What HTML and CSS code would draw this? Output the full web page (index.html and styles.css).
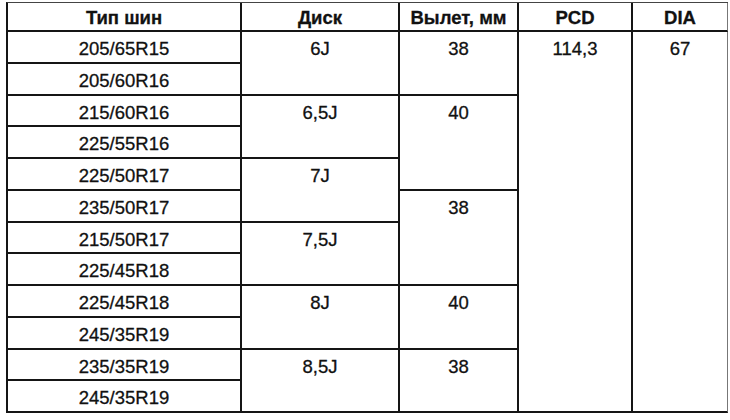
FILE: index.html
```html
<!DOCTYPE html>
<html lang="ru">
<head>
<meta charset="utf-8">
<title>Тип шин</title>
<link rel="stylesheet" href="styles.css">
</head>
<body>
<div class="tbl">
  <div class="cell head c1">Тип шин</div>
  <div class="cell head c2">Диск</div>
  <div class="cell head c3">Вылет, мм</div>
  <div class="cell head c4">PCD</div>
  <div class="cell head c5">DIA</div>

  <div class="cell c1">205/65R15</div>
  <div class="cell c2 s2">6J</div>
  <div class="cell c3 s2">38</div>
  <div class="cell c4 s12">114,3</div>
  <div class="cell c5 s12">67</div>
  <div class="cell c1">205/60R16</div>

  <div class="cell c1">215/60R16</div>
  <div class="cell c2 s2">6,5J</div>
  <div class="cell c3 s3">40</div>
  <div class="cell c1">225/55R16</div>

  <div class="cell c1">225/50R17</div>
  <div class="cell c2 s2">7J</div>
  <div class="cell c1">235/50R17</div>
  <div class="cell c3 s3">38</div>

  <div class="cell c1">215/50R17</div>
  <div class="cell c2 s2">7,5J</div>
  <div class="cell c1">225/45R18</div>

  <div class="cell c1">225/45R18</div>
  <div class="cell c2 s2">8J</div>
  <div class="cell c3 s2">40</div>
  <div class="cell c1">245/35R19</div>

  <div class="cell c1">235/35R19</div>
  <div class="cell c2 s2">8,5J</div>
  <div class="cell c3 s2">38</div>
  <div class="cell c1">245/35R19</div>
</div>
</body>
</html>
```

FILE: styles.css
```css
html, body {
  margin: 0;
  padding: 0;
  background: #ffffff;
}

body {
  font-family: "Liberation Sans", Arial, sans-serif;
  font-size: 18.5px;
  color: #111111;
}

.tbl {
  display: grid;
  grid-template-columns: 234px 158px 119px 114px 95px;
  grid-template-rows: 29px repeat(12, 31.75px);
  width: max-content;
  margin: 2px 0 0 6px;
  border-left: 2px solid #151515;
  border-top: 1.5px solid #444444;
}

.cell {
  box-sizing: border-box;
  border-right: 2px solid #151515;
  border-bottom: 2px solid #151515;
  text-align: center;
  padding-top: 7px;
  line-height: 20px;
  -webkit-text-stroke: 0.3px #111111;
}

.head {
  font-weight: bold;
  padding-top: 5px;
}

.c1 { grid-column: 1; }
.c2 { grid-column: 2; }
.c3 { grid-column: 3; }
.c4 { grid-column: 4; }
.c5 {
  grid-column: 5;
  border-right: 1px solid #777777;
}

.s2 { grid-row: span 2; }
.s3 { grid-row: span 3; }
.s12 { grid-row: span 12; }
```
